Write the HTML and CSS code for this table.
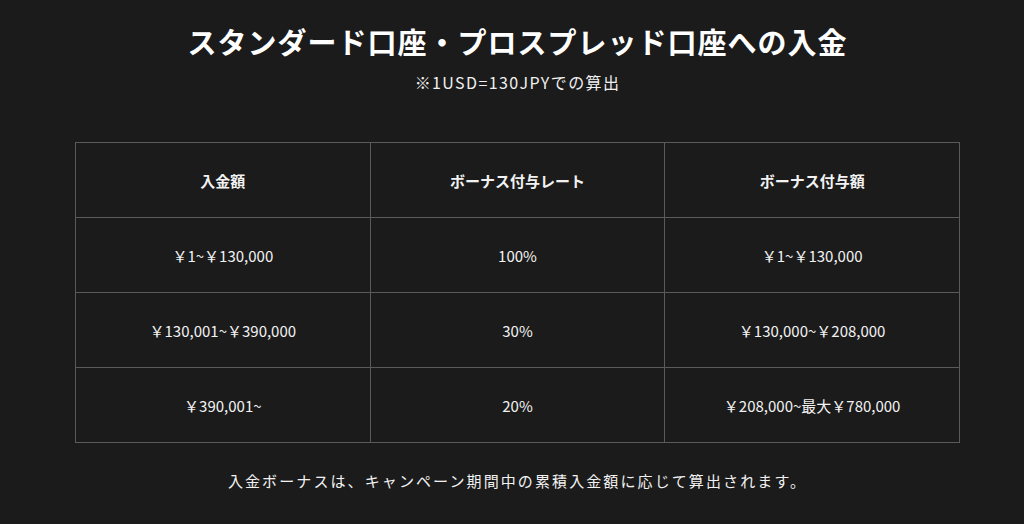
FILE: index.html
```html
<!DOCTYPE html>
<html lang="ja">
<head>
<meta charset="utf-8">
<link rel="stylesheet" href="styles.css">
</head>
<body>
<main class="page">
  <h1 class="title">スタンダード口座・プロスプレッド口座への入金</h1>
  <p class="note">※1USD=130JPYでの算出</p>
  <table class="bonus">
    <thead>
      <tr><th>入金額</th><th>ボーナス付与レート</th><th>ボーナス付与額</th></tr>
    </thead>
    <tbody>
      <tr><td>￥1~￥130,000</td><td>100%</td><td>￥1~￥130,000</td></tr>
      <tr><td>￥130,001~￥390,000</td><td>30%</td><td>￥130,000~￥208,000</td></tr>
      <tr><td>￥390,001~</td><td>20%</td><td>￥208,000~最大￥780,000</td></tr>
    </tbody>
  </table>
  <p class="foot">入金ボーナスは、キャンペーン期間中の累積入金額に応じて算出されます。</p>
</main>
</body>
</html>
```
FILE: styles.css
```css
html, body {
  margin: 0;
  padding: 0;
  height: 100%;
}
body {
  background: #1b1b1b;
  color: #ffffff;
  font-family: "Noto Sans CJK JP", "Noto Sans", sans-serif;
}
.page {
  display: flex;
  flex-direction: column;
  align-items: center;
  padding-top: 21px;
  padding-left: 11px;
}
.title {
  margin: 0;
  font-size: 29px;
  line-height: 40px;
  font-weight: 700;
  letter-spacing: 1px;
}
.note {
  margin: 10px 0 0;
  font-size: 16px;
  line-height: 22px;
  letter-spacing: 1.4px;
  color: #f0f0f0;
}
.bonus {
  margin-top: 49px;
  width: 885px;
  border-collapse: collapse;
  table-layout: fixed;
  font-size: 15px;
}
.bonus th, .bonus td {
  border: 1px solid #5a5a5a;
  height: 74px;
  padding: 0;
  text-align: center;
  vertical-align: middle;
  color: #f2f2f2;
}
.bonus th {
  font-weight: 700;
}
.foot {
  margin: 27px 0 0;
  font-size: 15px;
  line-height: 22px;
  letter-spacing: 2.1px;
  color: #f2f2f2;
}
```
